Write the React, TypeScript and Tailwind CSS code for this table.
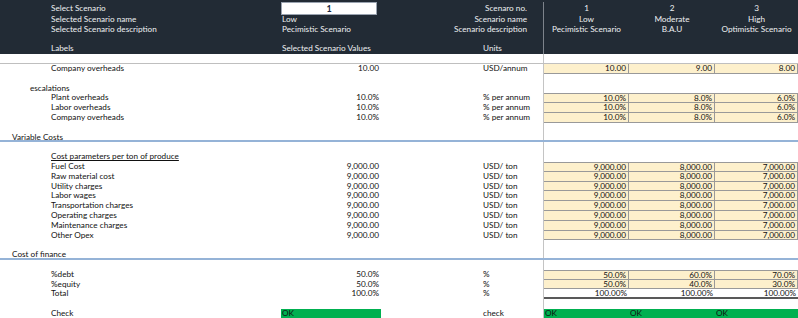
import React from 'react';

type Kind = 'input' | 'total' | 'ok';

interface RowProps {
  label?: React.ReactNode;
  indent?: string;
  value?: string;
  unit?: string;
  vals?: string[];
  kind?: Kind;
  first?: boolean;
  okLeft?: boolean;
  className?: string;
}

const cols = ['w-[85px]', 'w-[86px]', 'flex-1'];

function ScenarioCells({ vals, kind, first }: { vals?: string[]; kind?: Kind; first?: boolean }) {
  return (
    <>
      {cols.map((w, i) => {
        let cls = '';
        if (kind === 'input') {
          cls = `bg-[#fdf0cc] border-b border-r border-[#999999] text-right pr-[2px] ${first ? 'border-t' : ''}`;
        } else if (kind === 'total') {
          cls = 'border-b-2 border-[#595959] text-right pr-[2px]';
        } else if (kind === 'ok') {
          cls = 'bg-[#00b050] pl-[1px]';
        }
        return (
          <div key={i} className={`${w} h-full ${cls}`}>
            {vals ? vals[i] : ''}
          </div>
        );
      })}
    </>
  );
}

function Row({ label, indent = 'pl-[51px]', value, unit, vals, kind, first, okLeft, className = '' }: RowProps) {
  return (
    <div className={`flex h-[9.8px] leading-[9.8px] ${className}`}>
      <div className={`w-[281px] shrink-0 whitespace-nowrap ${indent}`}>{label}</div>
      {okLeft ? (
        <div className="w-[100px] shrink-0 bg-[#00b050] pl-[1px]">OK</div>
      ) : (
        <div className="w-[100px] shrink-0 text-right pr-[2px]">{value}</div>
      )}
      <div className="w-[163px] shrink-0 pl-[102px] border-r border-[#c4c4c4] whitespace-nowrap">{unit}</div>
      <ScenarioCells vals={vals} kind={kind} first={first} />
    </div>
  );
}

const costs = [
  'Fuel Cost',
  'Raw material cost',
  'Utility charges',
  'Labor wages',
  'Transportation charges',
  'Operating charges',
  'Maintenance charges',
  'Other Opex',
];

function HeaderRow({ left, mid, right, cells }: { left: string; mid: React.ReactNode; right: string; cells: string[] }) {
  return (
    <div className="flex h-[9.8px] leading-[9.8px]">
      <div className="w-[281px] shrink-0 pl-[51px]">{left}</div>
      <div className="w-[100px] shrink-0 pl-[1px] whitespace-nowrap">{mid}</div>
      <div className="w-[163px] shrink-0 border-r border-[#7d838b] text-right pr-[16px]">{right}</div>
      {cells.map((c, i) => (
        <div key={i} className={`${cols[i]} text-center whitespace-nowrap`}>{c}</div>
      ))}
    </div>
  );
}

export default function App() {
  return (
    <div className="w-[798px] h-[318px] overflow-hidden bg-white text-[8.2px] text-[#111] font-['Lato',sans-serif]">
      {/* dark header */}
      <div className="bg-[#222b35] text-[#eef0f2]">
        <div className="h-[2px] overflow-hidden">
          <div className="-mt-[7px] pl-[1px] leading-[9.8px]">Scenarios</div>
        </div>
        <div className="flex h-[13px] leading-[13px]">
          <div className="w-[281px] shrink-0 pl-[51px]">Select Scenario</div>
          <div className="w-[100px] shrink-0">
            <div className="w-[96px] h-[13px] bg-white border border-[#9aa3b0] text-center font-bold text-[9px] leading-[11px] text-[#1c2742]">1</div>
          </div>
          <div className="w-[163px] shrink-0 border-r border-[#7d838b] text-right pr-[16px]">Scenaro no.</div>
          <div className="w-[85px] text-center">1</div>
          <div className="w-[86px] text-center">2</div>
          <div className="flex-1 text-center">3</div>
        </div>
        <HeaderRow left="Selected Scenario name" mid="Low" right="Scenario name" cells={['Low', 'Moderate', 'High']} />
        <HeaderRow
          left="Selected Scenario description"
          mid="Pecimistic Scenario"
          right="Scenario description"
          cells={['Pecimistic Scenario', 'B.A.U', 'Optimistic Scenario']}
        />
        <HeaderRow left="" mid="" right="" cells={['', '', '']} />
        <div className="flex h-[9.8px] leading-[9.8px]">
          <div className="w-[281px] shrink-0 pl-[51px]">Labels</div>
          <div className="w-[100px] shrink-0 pl-[1px] whitespace-nowrap">Selected Scenario Values</div>
          <div className="w-[163px] shrink-0 border-r border-[#7d838b] pl-[102px]">Units</div>
        </div>
      </div>

      <Row className="border-b border-[#bfbfbf]" />
      <Row label="Company overheads" value="10.00" unit="USD/annum" vals={['10.00', '9.00', '8.00']} kind="input" />
      <Row />
      <Row label="escalations" indent="pl-[30px]" />
      <Row label="Plant overheads" value="10.0%" unit="% per annum" vals={['10.0%', '8.0%', '6.0%']} kind="input" first />
      <Row label="Labor overheads" value="10.0%" unit="% per annum" vals={['10.0%', '8.0%', '6.0%']} kind="input" />
      <Row label="Company overheads" value="10.0%" unit="% per annum" vals={['10.0%', '8.0%', '6.0%']} kind="input" />
      <Row />
      <Row label="Variable Costs" indent="pl-[12px]" className="border-b-2 border-[#95b3d7]" />
      <Row />
      <Row label={<span className="underline">Cost parameters per ton of produce</span>} />
      {costs.map((c, i) => (
        <Row
          key={c}
          label={c}
          value="9,000.00"
          unit="USD/ ton"
          vals={['9,000.00', '8,000.00', '7,000.00']}
          kind="input"
          first={i === 0}
        />
      ))}
      <Row />
      <Row label="Cost of finance" indent="pl-[12px]" className="border-b-2 border-[#95b3d7]" />
      <Row />
      <Row label="%debt" value="50.0%" unit="%" vals={['50.0%', '60.0%', '70.0%']} kind="input" first />
      <Row label="%equity" value="50.0%" unit="%" vals={['50.0%', '40.0%', '30.0%']} kind="input" />
      <Row label="Total" value="100.0%" unit="%" vals={['100.00%', '100.00%', '100.00%']} kind="total" />
      <Row />
      <Row label="Check" unit="check" okLeft vals={['OK', 'OK', 'OK']} kind="ok" />
    </div>
  );
}
